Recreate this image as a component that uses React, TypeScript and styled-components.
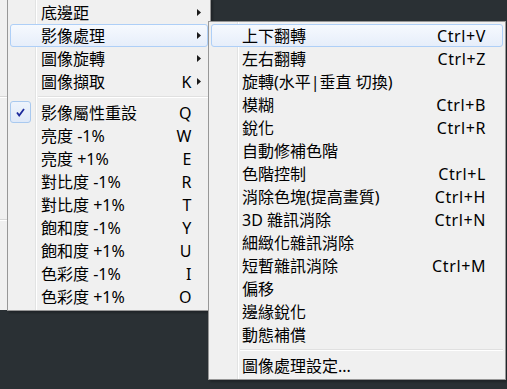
import React from "react";
import styled, { createGlobalStyle } from "styled-components";

const Global = createGlobalStyle`
  html, body { margin: 0; padding: 0; }
  body {
    background: #2a3034;
    font-family: "Noto Sans", "Noto Sans CJK TC", sans-serif;
  }
`;

const Desktop = styled.div`
  position: relative;
  width: 507px;
  height: 389px;
  overflow: hidden;
  background: #2a3034;
`;

const ParentStrip = styled.div`
  position: absolute;
  left: 0;
  top: 0;
  width: 7px;
  height: 310px;
  background: #f0f0f0;
  display: flex;
  flex-direction: column;
`;

const StripLine = styled.div<{ $top: number }>`
  height: 1px;
  margin-top: ${(p) => p.$top}px;
  background: #d7d7d7;
  box-shadow: 0 1px 0 #ffffff;
`;

const Menu = styled.div<{ $left: number; $top: number; $width: number; $gutter: number; $z: number }>`
  position: absolute;
  left: ${(p) => p.$left}px;
  top: ${(p) => p.$top}px;
  width: ${(p) => p.$width}px;
  box-sizing: border-box;
  z-index: ${(p) => p.$z};
  border: 1px solid #979797;
  padding: 2px 2px 2px 2px;
  background:
    linear-gradient(
      to right,
      transparent ${(p) => p.$gutter}px,
      #e2e3e3 ${(p) => p.$gutter}px,
      #e2e3e3 ${(p) => p.$gutter + 1}px,
      #ffffff ${(p) => p.$gutter + 1}px,
      #ffffff ${(p) => p.$gutter + 2}px,
      transparent ${(p) => p.$gutter + 2}px
    ),
    #f0f0f0;
  box-shadow: 2px 2px 2px rgba(0, 0, 0, 0.25);
  display: flex;
  flex-direction: column;
`;

const Row = styled.div<{ $active?: boolean; $padRight: number }>`
  position: relative;
  height: 23px;
  box-sizing: border-box;
  display: flex;
  align-items: center;
  padding-left: 31px;
  padding-right: ${(p) => p.$padRight}px;
  border: 1px solid ${(p) => (p.$active ? "#aecff7" : "transparent")};
  border-radius: 3px;
  background: ${(p) =>
    p.$active ? "linear-gradient(to bottom, #f6f9fe, #e6eefa)" : "transparent"};
  font-size: 16px;
  line-height: 23px;
  color: #000;
  white-space: nowrap;
`;

const Label = styled.span`
  flex: 1;
  padding-top: 2px;
  margin-left: -1px;
`;

const Shortcut = styled.span`
  padding-top: 2px;
  letter-spacing: 0.6px;
`;

const ArrowCell = styled.span`
  width: 15px;
  display: flex;
  align-items: center;
  padding-left: 5px;
  box-sizing: border-box;
`;

const CheckBox = styled.span`
  position: absolute;
  left: -1px;
  top: -1px;
  width: 21px;
  height: 22px;
  box-sizing: border-box;
  border: 1px solid #a9c9ef;
  border-radius: 3px;
  background: linear-gradient(to bottom, #eef4fc, #dfe9f8);
  display: flex;
  align-items: center;
  justify-content: center;
`;

const Separator = styled.div<{ $indent: number }>`
  height: 8px;
  display: flex;
  align-items: center;
  padding-left: ${(p) => p.$indent}px;
  &::before {
    content: "";
    flex: 1;
    height: 1px;
    background: #e0e0e0;
    box-shadow: 0 1px 0 #ffffff;
    margin-top: -1px;
  }
`;

type Item =
  | { sep: true }
  | { sep?: false; label: string; shortcut?: string; arrow?: boolean; active?: boolean; checked?: boolean };

const leftItems: Item[] = [
  { label: "底邊距", arrow: true },
  { label: "影像處理", arrow: true, active: true },
  { label: "圖像旋轉", arrow: true },
  { label: "圖像擷取", shortcut: "K", arrow: true },
  { sep: true },
  { label: "影像屬性重設", shortcut: "Q", checked: true },
  { label: "亮度 -1%", shortcut: "W" },
  { label: "亮度 +1%", shortcut: "E" },
  { label: "對比度 -1%", shortcut: "R" },
  { label: "對比度 +1%", shortcut: "T" },
  { label: "飽和度 -1%", shortcut: "Y" },
  { label: "飽和度 +1%", shortcut: "U" },
  { label: "色彩度 -1%", shortcut: "I" },
  { label: "色彩度 +1%", shortcut: "O" },
];

const subItems: Item[] = [
  { label: "上下翻轉", shortcut: "Ctrl+V", active: true },
  { label: "左右翻轉", shortcut: "Ctrl+Z" },
  { label: "旋轉(水平|垂直 切換)" },
  { label: "模糊", shortcut: "Ctrl+B" },
  { label: "銳化", shortcut: "Ctrl+R" },
  { label: "自動修補色階" },
  { label: "色階控制", shortcut: "Ctrl+L" },
  { label: "消除色塊(提高畫質)", shortcut: "Ctrl+H" },
  { label: "3D 雜訊消除", shortcut: "Ctrl+N" },
  { label: "細緻化雜訊消除" },
  { label: "短暫雜訊消除", shortcut: "Ctrl+M" },
  { label: "偏移" },
  { label: "邊緣銳化" },
  { label: "動態補償" },
  { sep: true },
  { label: "圖像處理設定..." },
];

const Arrow = () => (
  <svg width="4" height="7" viewBox="0 0 4 7">
    <polygon points="0,0 4,3.5 0,7" fill="#1a1a1a" />
  </svg>
);

const Check = () => (
  <svg width="9" height="9" viewBox="0 0 9 9">
    <polyline points="1,4.5 3.2,7.5 8,1" fill="none" stroke="#1c2a9c" strokeWidth="1.8" />
  </svg>
);

const MenuList = ({ items, padRight, sepIndent, withArrowCol }: { items: Item[]; padRight: number; sepIndent: number; withArrowCol: boolean }) => (
  <>
    {items.map((it, i) =>
      it.sep ? (
        <Separator key={i} $indent={sepIndent} />
      ) : (
        <Row key={i} $active={it.active} $padRight={padRight}>
          {it.checked && (
            <CheckBox>
              <Check />
            </CheckBox>
          )}
          <Label>{it.label}</Label>
          {it.shortcut && <Shortcut>{it.shortcut}</Shortcut>}
          {withArrowCol && <ArrowCell>{it.arrow && <Arrow />}</ArrowCell>}
        </Row>
      )
    )}
  </>
);

export default function App() {
  return (
    <>
      <Global />
      <Desktop>
        <ParentStrip>
          <StripLine $top={96} />
          <StripLine $top={122} />
        </ParentStrip>
        <Menu $left={7} $top={-2} $width={204} $gutter={27} $z={1}>
          <MenuList items={leftItems} padRight={0} sepIndent={28} withArrowCol />
        </Menu>
        <Menu $left={208} $top={21} $width={298} $gutter={28} $z={2}>
          <MenuList items={subItems} padRight={16} sepIndent={29} withArrowCol={false} />
        </Menu>
      </Desktop>
    </>
  );
}
